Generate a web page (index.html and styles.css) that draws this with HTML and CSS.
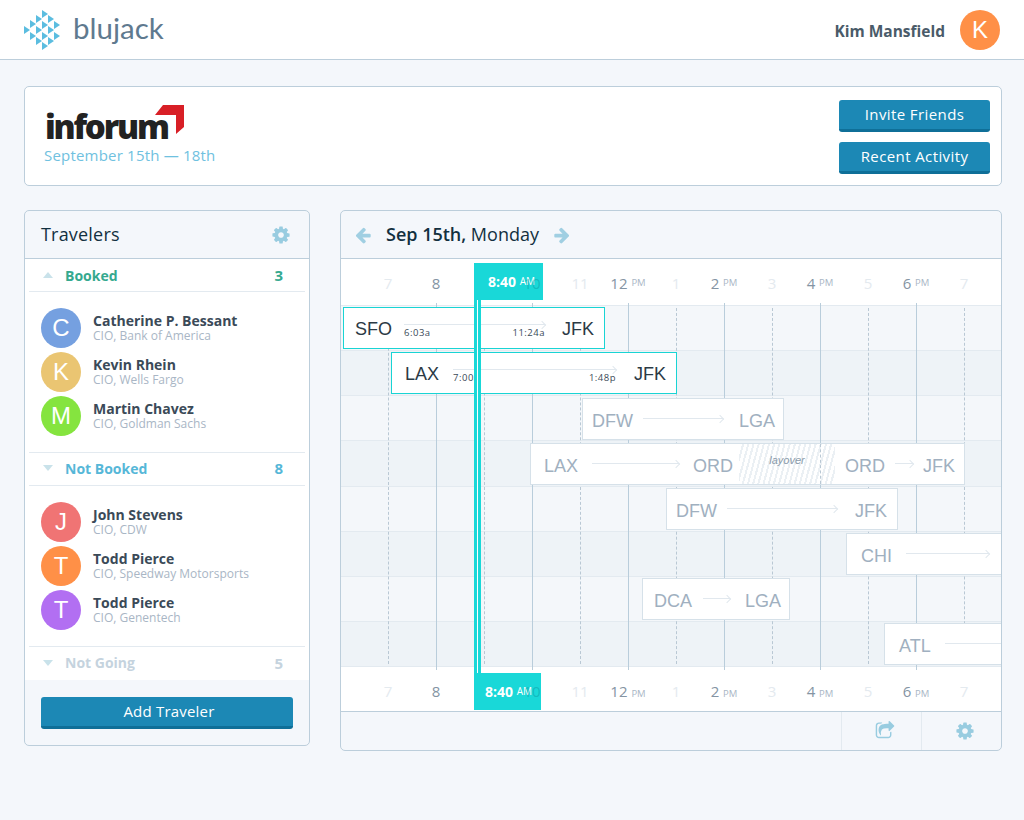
FILE: index.html
```html
<!DOCTYPE html>
<html lang="en">
<head>
<meta charset="utf-8">
<title>Blujack</title>
<link rel="stylesheet" href="styles.css">
</head>
<body>
<svg class="defs" width="0" height="0" aria-hidden="true">
  <symbol id="cog" viewBox="0 0 1792 1792"><path d="M1152 896q0-106-75-181t-181-75-181 75-75 181 75 181 181 75 181-75 75-181zm512-109v222q0 12-8 23t-20 13l-185 28q-19 54-39 91 35 50 107 138 10 12 10 25t-9 23q-27 37-99 108t-94 71q-12 0-26-9l-138-108q-44 23-91 38-16 136-29 186-7 28-36 28h-222q-14 0-24.5-8.5t-11.5-21.5l-28-184q-49-16-90-37l-141 107q-10 9-25 9-14 0-25-11-126-114-165-168-7-10-7-23 0-12 8-23 15-21 51-66.5t54-70.5q-27-50-41-99l-183-27q-13-2-21-12.5t-8-23.5v-222q0-12 8-23t19-13l186-28q14-46 39-92-40-57-107-138-10-12-10-24 0-10 9-23 26-36 98.5-107.5t94.5-71.5q13 0 26 10l138 107q44-23 91-38 16-136 29-186 7-28 36-28h222q14 0 24.5 8.5t11.5 21.5l28 184q49 16 90 37l142-107q9-9 24-9 13 0 25 10 129 119 165 170 7 8 7 22 0 12-8 23-15 21-51 66.5t-54 70.5q26 50 41 98l183 28q13 2 21 12.5t8 23.5z"/></symbol>
</svg>

<header class="topbar">
  <div class="brand">
    <svg class="brand-mark" viewBox="24 10 36 40" width="36" height="40"><path d="M24 26l6 4-6 4zM30 20l6 4-6 4zM30 32l6 4-6 4zM36 15l6 4-6 4zM36 26l6 4-6 4zM36 37l6 4-6 4zM42 10l6 4-6 4zM42 21l6 4-6 4zM42 32l6 4-6 4zM42 42l6 4-6 4zM48 15l6 4-6 4zM48 26l6 4-6 4zM48 37l6 4-6 4zM54 21l6 4-6 4zM54 32l6 4-6 4z"/></svg>
    <span class="brand-name">blujack</span>
  </div>
  <div class="user">
    <span class="user-name">Kim Mansfield</span>
    <span class="avatar orange">K</span>
  </div>
</header>

<main class="page">
  <section class="event">
    <div class="event-info">
      <div class="inforum">
        <span class="inforum-text">inforum</span>
        <svg class="inforum-arrow" viewBox="0 0 29 29" width="29" height="29"><path d="M0 10L8 0H29V22L21 29V10z"/></svg>
      </div>
      <div class="event-date">September 15th — 18th</div>
    </div>
    <div class="event-actions">
      <button class="btn btn-wide">Invite Friends</button>
      <button class="btn btn-wide">Recent Activity</button>
    </div>
  </section>

  <div class="columns">
    <aside class="panel travelers">
      <div class="panel-head">
        <h2 class="panel-title">Travelers</h2>
        <svg class="icon cog"><use href="#cog"/></svg>
      </div>
      <div class="panel-body">
        <div class="group-head booked"><span class="tri up"></span><span class="group-name">Booked</span><span class="group-count">3</span></div>
        <ul class="people">
          <li class="person"><span class="avatar blue">C</span><div><div class="person-name">Catherine P. Bessant</div><div class="person-role">CIO, Bank of America</div></div></li>
          <li class="person"><span class="avatar sand">K</span><div><div class="person-name">Kevin Rhein</div><div class="person-role">CIO, Wells Fargo</div></div></li>
          <li class="person"><span class="avatar green">M</span><div><div class="person-name">Martin Chavez</div><div class="person-role">CIO, Goldman Sachs</div></div></li>
        </ul>
        <div class="group-head notbooked"><span class="tri"></span><span class="group-name">Not Booked</span><span class="group-count">8</span></div>
        <ul class="people">
          <li class="person"><span class="avatar red">J</span><div><div class="person-name">John Stevens</div><div class="person-role">CIO, CDW</div></div></li>
          <li class="person"><span class="avatar orange">T</span><div><div class="person-name">Todd Pierce</div><div class="person-role">CIO, Speedway Motorsports</div></div></li>
          <li class="person"><span class="avatar purple">T</span><div><div class="person-name">Todd Pierce</div><div class="person-role">CIO, Genentech</div></div></li>
        </ul>
        <div class="group-head notgoing"><span class="tri"></span><span class="group-name">Not Going</span><span class="group-count">5</span></div>
      </div>
      <div class="panel-foot"><button class="btn btn-full">Add Traveler</button></div>
    </aside>

    <section class="panel schedule">
      <div class="panel-head day-head">
        <svg class="icon arrow" viewBox="0 0 1792 1792"><path d="M1664 896v128q0 53-32.5 90.5t-84.5 37.5h-704l293 294q38 36 38 90t-38 90l-75 76q-37 37-90 37-52 0-91-37l-651-652q-37-37-37-90 0-52 37-91l651-650q38-38 91-38 52 0 90 38l75 74q38 38 38 91t-38 91l-293 293h704q52 0 84.5 37.5t32.5 90.5z"/></svg>
        <h2 class="day-title"><b>Sep 15th,</b> Monday</h2>
        <svg class="icon arrow" viewBox="0 0 1792 1792"><path d="M1600 960q0 54-37 91l-651 651q-39 37-91 37-51 0-90-37l-75-75q-38-38-38-91t38-91l293-293h-704q-52 0-84.5-37.5t-32.5-90.5v-128q0-53 32.5-90.5t84.5-37.5h704l-293-294q-38-36-38-90t38-90l75-75q38-38 90-38 53 0 91 38l651 651q37 35 37 90z"/></svg>
      </div>
      <div class="timeline">
        <div class="ruler ruler-top">
          <span class="tick faint">7</span><span class="tick">8</span><span class="tick faint">9</span><span class="tick under">10</span><span class="tick faint">11</span><span class="tick">12 <small>PM</small></span><span class="tick faint">1</span><span class="tick">2 <small>PM</small></span><span class="tick faint">3</span><span class="tick">4 <small>PM</small></span><span class="tick faint">5</span><span class="tick">6 <small>PM</small></span><span class="tick faint">7</span>
        </div>
        <div class="rows">
          <div class="row"></div><div class="row"></div><div class="row"></div><div class="row"></div><div class="row"></div><div class="row"></div><div class="row"></div><div class="row"></div>
        </div>
        <div class="ruler ruler-bottom">
          <span class="tick faint">7</span><span class="tick">8</span><span class="tick faint">9</span><span class="tick under">10</span><span class="tick faint">11</span><span class="tick">12 <small>PM</small></span><span class="tick faint">1</span><span class="tick">2 <small>PM</small></span><span class="tick faint">3</span><span class="tick">4 <small>PM</small></span><span class="tick faint">5</span><span class="tick">6 <small>PM</small></span><span class="tick faint">7</span>
        </div>

        <div class="lines">
          <i class="dash"></i><i class="solid"></i><i class="dash"></i><i class="solid"></i><i class="dash"></i><i class="solid"></i><i class="dash"></i><i class="solid"></i><i class="dash"></i><i class="solid"></i><i class="dash"></i><i class="solid"></i><i class="dash"></i>
        </div>

        <div class="flights">
          <div class="flight active" style="left:2px;top:2px;width:262px">
            <span class="code">SFO</span>
            <div class="route"><span class="route-line"></span><div class="times"><span>6:03a</span><span>11:24a</span></div></div>
            <span class="code">JFK</span>
          </div>
          <div class="flight active roomy" style="left:50px;top:47px;width:286px">
            <span class="code">LAX</span>
            <div class="route"><span class="route-line"></span><div class="times"><span>7:00a</span><span>1:48p</span></div></div>
            <span class="code">JFK</span>
          </div>
          <div class="flight" style="left:241px;top:93px;width:202px">
            <span class="code">DFW</span><div class="route"><span class="route-line"></span></div><span class="code">LGA</span>
          </div>
          <div class="flight split" style="left:189px;top:138px;width:435px">
            <div class="leg leg-a"><span class="code">LAX</span><div class="route"><span class="route-line"></span></div><span class="code">ORD</span></div>
            <div class="layover"><em>layover</em></div>
            <div class="leg leg-b"><span class="code">ORD</span><div class="route"><span class="route-line"></span></div><span class="code">JFK</span></div>
          </div>
          <div class="flight tail" style="left:325px;top:183px;width:232px">
            <span class="code">DFW</span><div class="route"><span class="route-line"></span></div><span class="code">JFK</span>
          </div>
          <div class="flight open" style="left:505px;top:228px;width:156px">
            <span class="code">CHI</span><div class="route"><span class="route-line"></span></div>
          </div>
          <div class="flight roomy-left" style="left:301px;top:273px;width:148px">
            <span class="code">DCA</span><div class="route"><span class="route-line"></span></div><span class="code">LGA</span>
          </div>
          <div class="flight open clipped" style="left:543px;top:318px;width:135px">
            <span class="code">ATL</span><div class="route"><span class="route-line plain"></span></div>
          </div>
        </div>

        <div class="now-line"></div>
        <div class="now-tag now-top"><b>8:40</b> <small>AM</small></div>
        <div class="now-tag now-bottom"><b>8:40</b> <small>AM</small></div>
      </div>
      <div class="schedule-foot">
        <div class="foot-cell share">
          <svg class="icon" viewBox="0 0 1792 1792"><path d="M1472 989v259q0 119-84.5 203.5t-203.5 84.5h-832q-119 0-203.5-84.5t-84.5-203.5v-832q0-119 84.5-203.5t203.5-84.5h255q13 0 22.5 9.5t9.5 22.5q0 27-26 32-77 26-133 60-10 4-16 4h-112q-66 0-113 47t-47 113v832q0 66 47 113t113 47h832q66 0 113-47t47-113v-214q0-19 18-29 28-13 54-37 16-16 35-8 21 9 21 29zm237-496l-384 384q-18 19-45 19-12 0-25-5-39-17-39-59v-192h-160q-323 0-438 131-119 137-74 473 3 23-20 34-8 2-12 2-16 0-26-13-10-14-21-31t-39.5-68.5-49.5-99.5-38.5-114-17.5-122q0-49 3.5-91t14-90 28-88 47-81.5 68.5-74 94.5-61.5 124.5-48.5 159.5-30.5 196.5-11h160v-192q0-42 39-59 13-5 25-5 26 0 45 19l384 384q19 19 19 45t-19 45z"/></svg>
        </div>
        <div class="foot-cell">
          <svg class="icon cog"><use href="#cog"/></svg>
        </div>
      </div>
    </section>
  </div>
</main>
</body>
</html>
```

FILE: styles.css
```css
* { box-sizing: border-box; }
html, body { margin: 0; padding: 0; }
body {
  height: 820px;
  overflow: hidden;
  background: #f4f7fb;
  font-family: "Open Sans", "Liberation Sans", sans-serif;
  color: #3b4a58;
}
.defs { position: absolute; }
h2, ul { margin: 0; padding: 0; font-weight: normal; }
ul { list-style: none; }
button { font-family: inherit; border: 0; cursor: pointer; }

.topbar {
  height: 60px;
  background: #fff;
  border-bottom: 1px solid #bccedb;
  display: flex;
  align-items: center;
  justify-content: space-between;
  padding: 0 24px;
}
.brand { display: flex; align-items: center; gap: 13px; }
.brand-mark { fill: #5bbde0; display: block; }
.brand-name {
  font-family: "Lato", sans-serif;
  font-size: 29.5px;
  line-height: 32px;
  color: #5f7a8f;
  margin-top: -4px;
}
.user { display: flex; align-items: center; gap: 15px; }
.user-name { font-size: 15.5px; font-weight: 700; color: #4a5b69; margin-top: 2px; }

.avatar {
  width: 40px;
  height: 40px;
  flex: none;
  border-radius: 50%;
  display: flex;
  align-items: center;
  justify-content: center;
  color: #fff;
  font-family: "Liberation Sans", sans-serif;
  font-size: 24px;
}
.orange { background: #ff9047; }
.blue { background: #75a0e0; }
.sand { background: #eac572; }
.green { background: #85e43f; }
.red { background: #f07474; }
.purple { background: #b26ff2; }

.page { padding: 26px 22px 0 24px; }
.event {
  height: 100px;
  background: #fff;
  border: 1px solid #bccedb;
  border-radius: 5px;
  display: flex;
  justify-content: space-between;
  align-items: flex-start;
  padding: 13px 11px 0 19px;
}
.event-info { padding-top: 5px; }
.inforum { position: relative; height: 37px; width: 140px; }
.inforum-text {
  font-family: "Open Sans", sans-serif;
  font-weight: 800;
  font-size: 33px;
  line-height: 37px;
  letter-spacing: -2.2px;
  color: #222;
  margin-left: 1px;
  display: block;
  padding-top: 3px;
}
.inforum-arrow { position: absolute; left: 111px; top: 0; fill: #d81f26; }
.event-date { font-size: 15px; color: #6fc1e0; line-height: 20px; margin-top: 3px; letter-spacing: .2px; }
.event-actions { display: flex; flex-direction: column; gap: 10px; }

.btn {
  display: block;
  background: #1c88b5;
  border-bottom: 3px solid #0f6f98;
  border-radius: 3px;
  color: #fff;
  font-size: 15px;
  height: 32px;
  padding: 0 0 1px;
  letter-spacing: .4px;
}
.btn-wide { width: 151px; }
.btn-full { width: 100%; letter-spacing: .2px; padding-left: 4px; }

.columns { display: flex; align-items: flex-start; gap: 30px; margin-top: 24px; }
.panel {
  background: #f4f7fb;
  border: 1px solid #bccedb;
  border-radius: 5px;
  overflow: hidden;
}
.panel-head {
  height: 48px;
  border-bottom: 1px solid #bccedb;
  display: flex;
  align-items: center;
}
.icon { display: block; fill: #98cce0; }
.cog { width: 20px; height: 20px; }

.travelers { width: 286px; height: 536px; display: flex; flex-direction: column; }
.travelers .panel-head { padding: 0 18px 0 16px; justify-content: space-between; }
.panel-title { font-size: 18px; font-weight: 500; color: #12303f; letter-spacing: .2px; padding-bottom: 2px; }
.panel-body { background: #fff; padding: 0 4px; height: 421px; }
.group-head {
  height: 33px;
  display: flex;
  align-items: center;
  font-weight: 700;
  font-size: 14px;
  padding: 0 22px 0 14px;
  border-bottom: 1px solid #e3eaf0;
}
.notgoing { border-bottom: 0; }
.notbooked, .notgoing { padding-bottom: 2px; }
.group-name { flex: 1; margin-left: 12px; }
.group-count { font-size: 15px; }
.tri { width: 0; height: 0; border: 5.5px solid transparent; border-top: 6px solid #c9e2ea; border-bottom: 0; }
.tri.up { border-top: 0; border-bottom: 6px solid #c9e2ea; }
.booked { color: #35a98f; }
.notbooked { color: #56b7d8; }
.notgoing { color: #c5d3de; }
.people {
  padding: 16px 0 16px 12px;
  display: flex;
  flex-direction: column;
  gap: 4px;
  border-bottom: 1px solid #e3eaf0;
  height: 161px;
}
.person { display: flex; align-items: center; gap: 12px; height: 40px; }
.person-name { font-size: 14px; font-weight: 700; line-height: 17px; color: #3b4a58; margin-top: -1px; }
.person-role { font-size: 12px; line-height: 14px; color: #a9b6c5; }
.panel-foot { flex: 1; padding: 17px 16px 0; }

.schedule { width: 662px; height: 541px; }
.day-head { padding-left: 13px; gap: 14px; }
.arrow { width: 18px; height: 18px; fill: #a0cfe2; }
.day-title { font-size: 18px; color: #12303f; padding-bottom: 2px; }
.day-title b { font-weight: 600; }

.timeline { position: relative; height: 453px; border-bottom: 1px solid #bccedb; }
.ruler { background: #fff; display: flex; padding-left: 23px; }
.ruler-top { height: 47px; border-bottom: 1px solid #e3eaf0; padding-top: 13px; }
.ruler-bottom { height: 44px; padding-top: 13px; }
.tick {
  width: 48px;
  text-align: center;
  font-size: 15px;
  line-height: 22px;
  color: #8494a3;
  white-space: nowrap;
}
.tick small { font-size: 9.5px; color: #a9b6c5; }
.ruler-top .tick small { position: relative; top: -3px; }
.faint { color: #e4eaef; }
.tick.under { color: rgba(10, 140, 150, .4); position: relative; z-index: 4; }

.rows { height: 361px; display: grid; grid-template-rows: repeat(8, 1fr); }
.row { background: #f4f7fa; border-bottom: 1px solid #e3eaf0; }
.row:nth-child(even) { background: #eef3f7; }

.lines { position: absolute; left: 47px; top: 44px; height: 367px; display: flex; }
.lines i { width: 48px; height: 100%; display: block; }
.solid { border-left: 1px solid #b9cddb; }
.dash { margin-top: 5px; height: 356px !important; border-left: 1px dashed #b9c8d4; }

.flights { position: absolute; left: 0; top: 46px; width: 660px; height: 361px; overflow: hidden; }
.flight {
  position: absolute;
  height: 42px;
  background: #fff;
  border: 1px solid #d6e1e9;
  display: flex;
  align-items: center;
  gap: 10px;
  padding: 0 8px 0 9px;
  color: #a0b0c0;
  font-family: "Liberation Sans", sans-serif;
}
.flight.tail { padding-right: 10px; }
.flight.active { border-color: #19d4d4; color: #2b3a45; padding: 0 10px 0 11px; gap: 12px; }
.flight.active.roomy { padding: 0 10px 0 13px; gap: 14px; }
.flight.roomy-left { padding-left: 11px; gap: 11px; }
.flight.split { padding: 0; gap: 0; }
.flight.open { border-right: 0; padding: 0 13px 0 14px; gap: 14px; }
.flight.clipped { padding-right: 0; }
.code { font-size: 18px; line-height: 20px; flex: none; padding-top: 4px; }
.flight.active .code { padding-top: 2px; }
.route { flex: 1; position: relative; height: 10px; margin-right: 6px; }
.tail .route { margin-right: 8px; }
.roomy-left .route { margin-right: 4px; }
.open .route { margin-right: 0; }
.active .route { margin: -6px 5px 0 0; }
.active.roomy .route { margin-right: 4px; }
.route-line {
  position: absolute;
  left: 0;
  right: 0;
  top: 4px;
  height: 1px;
  background: #e1e8ee;
}
.route-line::after {
  content: "";
  position: absolute;
  right: 0;
  top: -2px;
  width: 5px;
  height: 5px;
  border-top: 1px solid #e1e8ee;
  border-right: 1px solid #e1e8ee;
  transform: rotate(45deg);
}
.route-line.plain::after { display: none; }
.times {
  position: absolute;
  left: 0;
  right: 0;
  top: 7px;
  display: flex;
  justify-content: space-between;
  font-size: 9.5px;
  line-height: 12px;
  letter-spacing: .5px;
  color: #3b4a58;
  font-family: "Open Sans", sans-serif;
}
.leg { display: flex; align-items: center; gap: 14px; height: 100%; }
.leg-a { width: 208px; padding: 0 6px 0 13px; }
.leg-b { flex: 1; padding: 0 9px 0 10px; gap: 10px; }
.leg .route { margin-right: 0; }
.layover {
  width: 96px;
  height: 100%;
  flex: none;
  position: relative;
  text-align: center;
  background: repeating-linear-gradient(105deg, #fff 0 3px, #ebf0f4 3px 5px);
}
.layover::after {
  content: "";
  position: absolute;
  left: 81px;
  top: 0;
  bottom: 0;
  border-left: 1px dashed #b9c8d4;
}
.layover em {
  display: block;
  font-size: 11px;
  line-height: 14px;
  margin-top: 9px;
  color: #8a9bab;
}

.now-line {
  position: absolute;
  left: 133px;
  top: 41px;
  width: 7px;
  height: 373px;
  z-index: 3;
  background: linear-gradient(to right, #19d8d8 3px, #fff 3px, #fff 4px, #19d8d8 4px);
}
.now-tag {
  position: absolute;
  left: 133px;
  height: 37px;
  z-index: 3;
  background: #19d8d8;
  color: #fff;
  font-size: 14px;
  line-height: 37px;
  white-space: nowrap;
}
.now-tag b { font-weight: 700; }
.now-tag small { font-size: 10px; position: relative; top: -2px; }
.now-top { top: 4px; width: 69px; padding-left: 14px; }
.now-bottom { top: 414px; width: 67px; padding-left: 11px; }

.schedule-foot { height: 38px; display: flex; justify-content: flex-end; }
.foot-cell {
  width: 80px;
  border-left: 1px solid #e3eaf0;
  display: flex;
  align-items: center;
  justify-content: center;
  padding-left: 7px;
}
.foot-cell .icon { width: 20px; height: 20px; }
```
